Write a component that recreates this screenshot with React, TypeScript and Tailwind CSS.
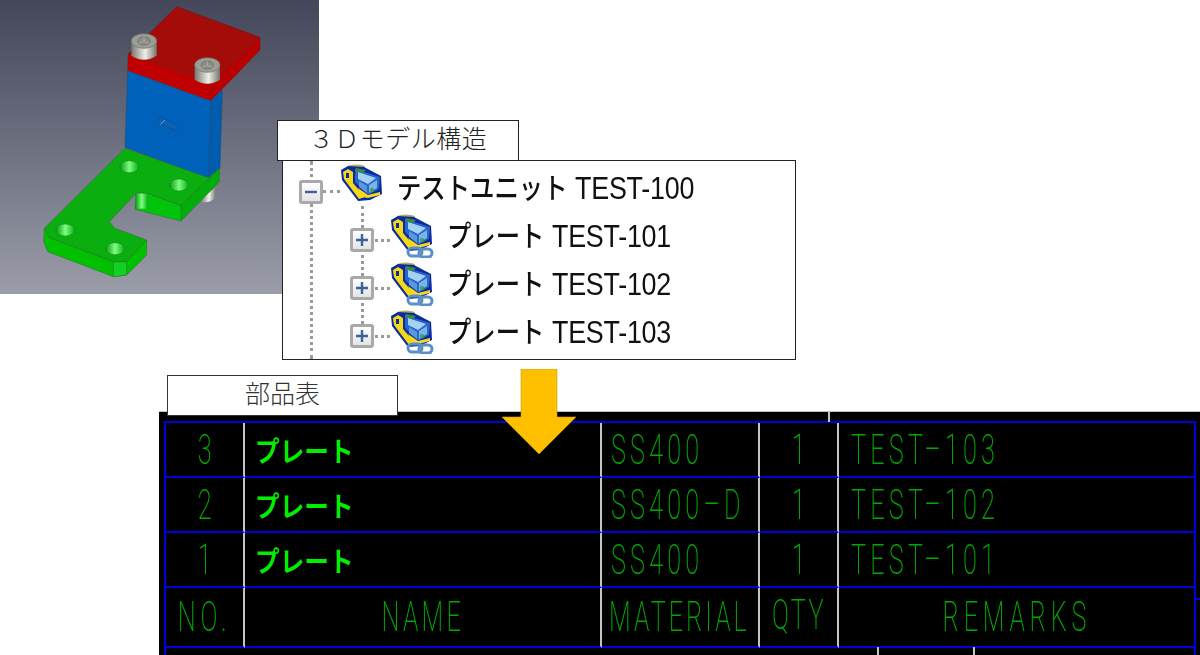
import React from "react";

const JP = "font-['Noto_Sans_CJK_JP',sans-serif]";

function Model() {
  return (
    <svg viewBox="0 0 960 885" className="w-[320px] h-[295px] blur-[0.4px]">
      <defs>
        <linearGradient id="hole" x1="0" x2="1" y1="0" y2="0">
          <stop offset="0" stopColor="#009a08" />
          <stop offset="0.5" stopColor="#7dff80" />
          <stop offset="1" stopColor="#00b010" />
        </linearGradient>
        <linearGradient id="bolt" x1="0" x2="1" y1="0" y2="0">
          <stop offset="0" stopColor="#777970" />
          <stop offset="0.55" stopColor="#eeefe6" />
          <stop offset="1" stopColor="#74766e" />
        </linearGradient>
      </defs>
      <polygon points="530,20 780,112 635,252 385,162" fill="#a30c09" stroke="#7a1010" strokeWidth="1.5" />
      <polygon points="385,162 635,252 632,303 383,212" fill="#c00000" stroke="#8a1010" strokeWidth="1.5" />
      <polygon points="635,252 780,112 780,150 632,303" fill="#b80000" stroke="#8a1010" strokeWidth="1.5" />
      <polygon points="632,303 667,270 660,505 625,535" fill="#005cae" stroke="#204a78" strokeWidth="1.5" />
      <polygon points="383,212 632,303 625,535 375,442" fill="#0061ba" stroke="#204a78" strokeWidth="1.5" />
      <line x1="482" y1="362" x2="527" y2="382" stroke="#12508f" strokeWidth="20" strokeLinecap="round" />
      <line x1="482" y1="362" x2="527" y2="382" stroke="#0a62b4" strokeWidth="15" strokeLinecap="round" />
      <line x1="480" y1="374" x2="495" y2="360" stroke="#5ca4dc" strokeWidth="3" />
      <path d="M602,598 L648,560 L648,590 Q630,612 602,605 Z" fill="url(#bolt)" />
      <polygon points="543,617 658,505 658,545 543,663" fill="#00ad0a" stroke="#2c6e2c" strokeWidth="1.5" />
      <polygon points="410,582 443,580 543,617 543,663 405,628" fill="#00c40a" stroke="#2c6e2c" strokeWidth="1.5" />
      <rect x="406" y="580" width="38" height="46" fill="url(#hole)" />
      <polygon points="133,685 147,712 340,785 380,785 440,720 440,765 380,825 340,830 143,755 131,725" fill="#00c000" stroke="#2c6e2c" strokeWidth="1.5" />
      <polygon points="340,785 380,785 380,825 340,830" fill="#10d020" stroke="#2c6e2c" strokeWidth="1.5" />
      <polygon points="375,445 625,533 658,505 543,617 443,580 410,578 328,665 345,685 440,720 380,785 340,785 147,712 133,685" fill="#0aae0e" stroke="#2c6e2c" strokeWidth="1.5" />
      {[[388, 500], [537, 555], [196, 690], [345, 746]].map(([x, y]) => (
        <ellipse key={x} cx={x} cy={y} rx="29" ry="18" fill="url(#hole)" stroke="#2c6e2c" strokeWidth="1.5" />
      ))}
      {[[432, 123], [622, 195]].map(([x, y]) => (
        <g key={x}>
          <path d={`M${x - 38},${y} L${x + 38},${y} L${x + 38},${y + 44} Q${x},${y + 68} ${x - 38},${y + 44} Z`} fill="url(#bolt)" />
          <ellipse cx={x} cy={y} rx="38" ry="22" fill="#9c9d96" stroke="#6f7068" strokeWidth="2" />
          <ellipse cx={x} cy={y} rx="19" ry="12" fill="#8c8d86" stroke="#66675f" strokeWidth="2" />
          <path d={`M${x},${y} L${x},${y - 12} M${x},${y} L${x - 14},${y + 7} M${x},${y} L${x + 14},${y + 7}`} stroke="#c8c8c0" strokeWidth="1.5" />
        </g>
      ))}
    </svg>
  );
}

function AsmIcon({ linked }: { linked?: boolean }) {
  return (
    <svg viewBox="0 0 44 44" className={linked ? "w-[44px] h-[44px] shrink-0 blur-[0.3px]" : "w-[44px] h-[44px] shrink-0 -mt-[5px] blur-[0.3px]"}>
      <ellipse cx="16" cy="3" rx="9" ry="2.6" fill="#b9a860" />
      <polygon points="1,6 8,2 24,3 41,12 42,30 30,36 18,37 2,16" fill="#0a2aa0" />
      <polygon points="3,8 8,5 13,8 13,19 25,33 19,35 4,15" fill="#f7d818" />
      <polygon points="18,24 28,31 40,28 40,31 28,34 22,33" fill="#f7d818" />
      <polygon points="15,5 40,13 39,25 28,31 15,18" fill="#2a66c4" />
      <polygon points="18,8 36,14 28,20 18,15" fill="#a4d0f4" />
      <polygon points="29,21 37,16 37,24 29,29" fill="#7cb2ec" />
      <polygon points="19,17 27,22 27,29 19,23" fill="#5c96e0" />
      <polygon points="16,4 26,6 23,9 15,7" fill="#3a8a48" />
      <circle cx="32" cy="26" r="2" fill="#2ea84a" />
      <rect x="6" y="9" width="3" height="5" fill="#0a2aa0" />
      {linked && (
        <g fill="none" stroke="#5c90c4" strokeWidth="3">
          <rect x="18" y="34" width="14" height="8" rx="4" />
          <rect x="29" y="35" width="13" height="8" rx="4" />
        </g>
      )}
    </svg>
  );
}

function ExpandBox({ minus, className }: { minus?: boolean; className: string }) {
  return (
    <div className={`relative z-10 flex items-center justify-center w-[24px] h-[24px] shrink-0 rounded-[3px] border-[3px] border-[#a9a9a9] bg-linear-to-b from-white to-[#e4e4e4] ${className}`}>
      <svg viewBox="0 0 16 16" className="w-[16px] h-[16px]">
        <path d={minus ? "M2,8 H14" : "M2,8 H14 M8,2 V14"} stroke="#3f5f9f" strokeWidth="2.4" />
      </svg>
    </div>
  );
}

function Dots({ className }: { className: string }) {
  return <div className={`border-t-[3px] border-dotted border-[#999] shrink-0 ${className}`} />;
}

function TreeLabel({ name, code }: { name: string; code: string }) {
  return (
    <span className={`ml-[13px] inline-block origin-left scale-x-[0.84] text-[29px] font-medium text-[#111] whitespace-nowrap ${JP}`}>
      {name}
      <span className="ml-[9px] font-['Liberation_Sans',sans-serif] font-normal text-[32px] tracking-[-0.3px]">{code}</span>
    </span>
  );
}

function ChildRow({ n }: { n: string }) {
  return (
    <div className="flex items-center h-[48px] pl-[67px]">
      <ExpandBox className="mt-[8px]" />
      <Dots className="w-[15px] mt-[8px] ml-[1px]" />
      <AsmIcon linked />
      <TreeLabel name="プレート" code={`TEST-${n}`} />
    </div>
  );
}

function Cad({ t, className = "" }: { t: string; className?: string }) {
  return (
    <span className={`inline-block whitespace-nowrap scale-x-[0.6] font-['Roboto',sans-serif] font-extralight text-[42px] leading-none text-[#00a800] ${className}`}>
      {t}
    </span>
  );
}

const blue = "border-b-2 border-[#0000d8]";
const vert = "border-r-2 border-r-[#c4c4c4]";

function Row({ no, mat, rem, h }: { no: string; mat: string; rem: string; h: string }) {
  return (
    <>
      <div className={`${blue} ${vert} ${h} flex items-center justify-center`}>
        <Cad t={no} />
      </div>
      <div className={`${blue} ${vert} ${h} flex items-center pl-[10px]`}>
        <span className={`inline-block origin-left scale-x-[0.88] text-[28px] font-bold text-[#00ee00] whitespace-nowrap ${JP}`}>プレート</span>
      </div>
      <div className={`${blue} ${vert} ${h} flex items-center pl-[9px]`}>
        <Cad t={mat} className="origin-left tracking-[7px]" />
      </div>
      <div className={`${blue} ${vert} ${h} flex items-center justify-center`}>
        <Cad t="1" />
      </div>
      <div className={`${blue} ${h} flex items-center pl-[12px]`}>
        <Cad t={rem} className="origin-left tracking-[7px]" />
      </div>
    </>
  );
}

export default function App() {
  return (
    <div className="relative w-[1200px] h-[655px] overflow-hidden bg-white flex flex-col">
      <div className="flex h-[411px] shrink-0">
        <div className="w-[319px] h-[294px] shrink-0 overflow-hidden bg-linear-to-b from-[#434759] to-[#9b9da9]">
          <Model />
        </div>
        <div className="relative -ml-[37px] mt-[160px] w-[514px] h-[200px] bg-white border border-[#222] pt-[3px]">
          <div className="absolute left-[27px] top-0 bottom-0 border-l-[3px] border-dotted border-[#9a9a9a]" />
          <div className="absolute left-[78px] top-[45px] h-[142px] border-l-[3px] border-dotted border-[#9a9a9a]" />
          <div className="relative flex items-center h-[48px] pl-[16px]">
            <ExpandBox minus className="mt-[7px]" />
            <Dots className="w-[17px] mt-[7px]" />
            <AsmIcon />
            <TreeLabel name="テストユニット" code="TEST-100" />
          </div>
          <div className="relative">
            <ChildRow n="101" />
            <ChildRow n="102" />
            <ChildRow n="103" />
          </div>
        </div>
      </div>

      <div className="relative flex-1 ml-[159px] bg-black border-t border-[#c0c0c0] pt-[9px] pl-[5px] pr-[4px]">
        <div className="h-full border-x-2 border-[#0000d8]">
          <div className="grid grid-cols-[79px_357px_158px_79px_1fr] border-t-2 border-[#0000d8]">
            <Row no="3" mat="SS400" rem="TEST–103" h="h-[55px]" />
            <Row no="2" mat="SS400–D" rem="TEST–102" h="h-[55px]" />
            <Row no="1" mat="SS400" rem="TEST–101" h="h-[55px]" />
            <div className={`${blue} ${vert} h-[60px] flex items-center justify-center`}>
              <Cad t="NO." className="tracking-[8px]" />
            </div>
            <div className={`${blue} ${vert} h-[60px] flex items-center justify-center`}>
              <Cad t="NAME" className="tracking-[5.5px]" />
            </div>
            <div className={`${blue} ${vert} h-[60px] flex items-center pl-[7px]`}>
              <Cad t="MATERIAL" className="origin-left tracking-[5px]" />
            </div>
            <div className={`${blue} ${vert} h-[60px] flex items-center justify-center`}>
              <Cad t="QTY" className="tracking-[4px] -mt-[4px]" />
            </div>
            <div className={`${blue} h-[60px] flex items-center justify-center`}>
              <Cad t="REMARKS" className="tracking-[8px]" />
            </div>
          </div>
        </div>
        <div className="absolute left-[669px] top-0 h-[10px] border-l-2 border-[#c4c4c4]" />
        <div className="absolute left-[718px] bottom-0 h-[8px] border-l-2 border-[#c4c4c4]" />
        <div className="absolute left-[814px] bottom-0 h-[8px] border-l-2 border-[#c4c4c4]" />
        <div className="absolute right-0 top-[186px] w-[5px] border-t-2 border-[#0000d8]" />
      </div>

      <div className={`absolute left-[277px] top-[120px] w-[242px] h-[41px] flex items-center justify-center bg-white border border-[#222] text-[25px] tracking-[0.5px] text-[#222] font-light whitespace-nowrap pb-[6px] ${JP}`}>
        ３Ｄモデル構造
      </div>
      <div className={`absolute left-[167px] top-[375px] w-[231px] h-[41px] flex items-center justify-center bg-white border border-[#333] text-[25px] text-[#333] font-light whitespace-nowrap pb-[6px] ${JP}`}>
        部品表
      </div>
      <svg viewBox="0 0 76 86" className="absolute left-[501px] top-[369px] w-[76px] h-[86px]">
        <polygon points="20,0 56,0 56,48 75,48 38,85 1,48 20,48" fill="#ffc000" stroke="#c99a10" strokeWidth="0.6" />
      </svg>
    </div>
  );
}
